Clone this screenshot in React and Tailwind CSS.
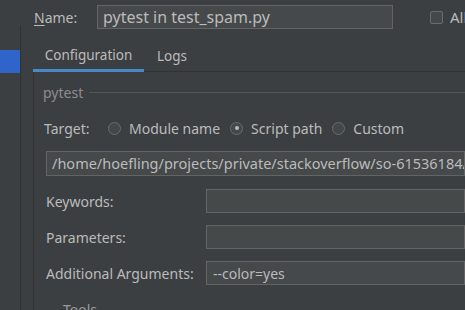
const Radio = ({ checked, label }) => (
  <label className="flex items-center gap-[8px]">
    <span className="w-[13px] h-[13px] rounded-full border border-[#6b6b6b] bg-[#43494a] flex items-center justify-center">
      {checked && <span className="w-[4px] h-[4px] rounded-full bg-[#bbbbbb]" />}
    </span>
    <span>{label}</span>
  </label>
);

const Field = ({ label, value }) => (
  <div className="flex items-center h-[24px] shrink-0">
    <span className="w-[160px] shrink-0">{label}</span>
    <div className="flex-1 h-[24px] bg-[#45494a] border border-[#646464] px-[6px] flex items-center">
      {value}
    </div>
  </div>
);

const App = () => {
  return (
    <div
      className="w-[465px] h-[310px] bg-[#3c3f41] text-[#bbbbbb] text-[14px] flex overflow-hidden"
      style={{ fontFamily: '"Noto Sans", "Open Sans", sans-serif' }}
    >
      {/* sidebar */}
      <div className="w-[21px] shrink-0 pt-[26px] flex flex-col">
        <div className="flex-1 border-r border-[#2f3133] pt-[24px]">
          <div className="h-[23px] bg-[#2f65ca]" />
        </div>
      </div>

      <div className="flex-1 flex flex-col pl-[12px] min-w-0">
        {/* name row */}
        <div className="flex items-center h-[24px] mt-[5px] whitespace-nowrap shrink-0">
          <span className="w-[64px] shrink-0 pl-[1px]">
            <span className="underline underline-offset-2">N</span>ame:
          </span>
          <div className="w-[296px] shrink-0 h-[24px] bg-[#45494a] border border-[#646464] px-[5px] flex items-center text-[16px]">
            pytest in test_spam.py
          </div>
          <div className="ml-[37px] shrink-0 flex items-center gap-[7px] text-[15px]">
            <span className="w-[13px] h-[13px] rounded-[2px] border border-[#6b6b6b] bg-[#43494a]" />
            <span>Allow parallel run</span>
          </div>
        </div>

        {/* tabs */}
        <div className="flex mt-[12px] border-b border-[#323232] h-[31px] items-stretch shrink-0">
          <div className="w-[111px] flex items-center justify-center border-b-[3px] border-[#4a88c7] mb-[-1px] text-[13.5px]">
            Configuration
          </div>
          <div className="px-[13px] flex items-center text-[13.5px]">Logs</div>
        </div>

        {/* panel */}
        <div className="flex-1 min-h-0 border-l border-[#323232] pl-[9px] pt-[10px] flex flex-col">
          <div className="flex items-center gap-[6px] text-[#8c8c8c] shrink-0">
            <span>pytest</span>
            <div className="flex-1 h-px bg-[#545658]" />
          </div>

          <div className="flex items-center mt-[15px] pl-[1px] h-[20px] shrink-0">
            <span className="w-[64px] shrink-0">Target:</span>
            <div className="flex items-center gap-[10px]">
              <Radio label="Module name" />
              <Radio checked label="Script path" />
              <Radio label="Custom" />
            </div>
          </div>

          <div className="mt-[13px] ml-[3px] h-[25px] shrink-0 bg-[#45494a] border border-[#646464] px-[5px] flex items-center whitespace-nowrap overflow-hidden text-[14.5px]">
            /home/hoefling/projects/private/stackoverflow/so-61536184/test_spam.py
          </div>

          <div className="ml-[3px] mt-[13px] flex flex-col gap-[12px] shrink-0">
            <Field label="Keywords:" value="" />
            <Field label="Parameters:" value="" />
            <Field label="Additional Arguments:" value="--color=yes" />
          </div>

          <div className="ml-[20px] mt-[14px] text-[#9a9a9a] shrink-0">Tools</div>
        </div>
      </div>
    </div>
  );
};

export default App;
